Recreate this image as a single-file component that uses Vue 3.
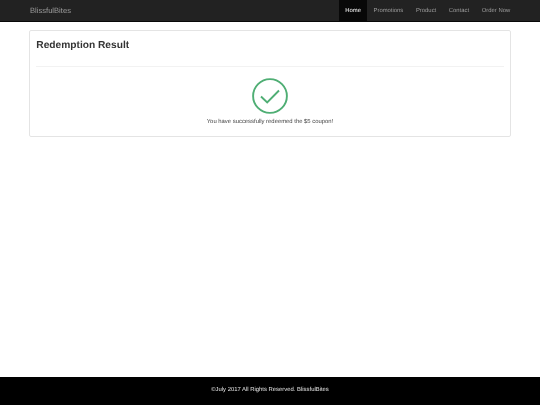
<script setup>
const links = [
  { label: 'Home', active: true },
  { label: 'Promotions' },
  { label: 'Product' },
  { label: 'Contact' },
  { label: 'Order Now' },
]
</script>

<template>
  <div class="page">
    <header class="navbar">
      <a class="brand">BlissfulBites</a>
      <nav class="nav">
        <a v-for="l in links" :key="l.label" class="link" :class="{ active: l.active }">{{ l.label }}</a>
      </nav>
    </header>
    <main class="main">
      <section class="panel">
        <h2 class="title">Redemption Result</h2>
        <hr class="rule" />
        <svg class="check" viewBox="0 0 36 36" width="36" height="36" aria-hidden="true">
          <circle cx="18" cy="18" r="16.9" fill="none" stroke="#4fae74" stroke-width="1.9" />
          <path d="M9 18.5 L15.2 24.5 L27 12.5" fill="none" stroke="#4fae74" stroke-width="1.9" />
        </svg>
        <p class="message">You have successfully redeemed the $5 coupon!</p>
      </section>
    </main>
    <footer class="footer">©July 2017 All Rights Reserved. BlissfulBites</footer>
  </div>
</template>

<style>
html, body { margin: 0; background: #fff; }
</style>

<style scoped>
.page {
  width: 540px;
  height: 405px;
  display: flex;
  flex-direction: column;
  font-family: "Liberation Sans", Arial, sans-serif;
  font-size: 5.9px;
  color: #444;
  overflow: hidden;
  text-rendering: geometricPrecision;
  filter: blur(0.35px);
}
.navbar {
  height: 21.5px;
  flex: none;
  box-sizing: border-box;
  background: #222;
  border-bottom: 1px solid #080808;
  display: flex;
  justify-content: space-between;
  padding: 0 23.5px 0 30px;
}
.brand {
  font-size: 7.6px;
  line-height: 21px;
  color: #9d9d9d;
}
.nav { display: flex; }
.link {
  padding: 0 6.3px;
  line-height: 22.5px;
  height: 21px;
  color: #9d9d9d;
}
.link.active {
  background: #080808;
  color: #fff;
}
.main {
  flex: 1;
  padding: 8.5px 29px 0 29px;
}
.panel {
  box-sizing: border-box;
  height: 107px;
  border: 1px solid #e4e4e4;
  border-radius: 2px;
  padding: 0 6.3px;
  display: flex;
  flex-direction: column;
  align-items: center;
}
.title {
  align-self: flex-start;
  margin: 7.5px 0 0;
  font-size: 10.2px;
  line-height: 13px;
  font-weight: 700;
  color: #333;
}
.rule {
  align-self: stretch;
  margin: 14.5px 0 0;
  border: 0;
  border-top: 1px solid #f2f2f2;
}
.check {
  margin-top: 11px;
  flex: none;
}
.message {
  margin: 3.5px 0 0;
  line-height: 8px;
}
.footer {
  height: 28px;
  flex: none;
  background: #000;
  color: #e6e6e6;
  text-align: center;
  line-height: 26.5px;
}
</style>
